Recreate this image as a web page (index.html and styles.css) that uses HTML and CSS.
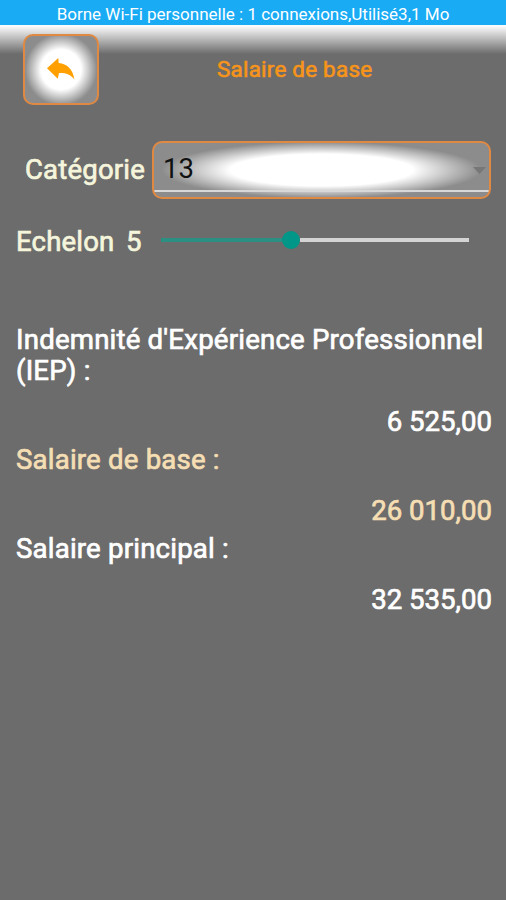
FILE: index.html
```html
<!DOCTYPE html>
<html lang="fr">
<head>
<meta charset="utf-8">
<title>Salaire de base</title>
<link rel="stylesheet" href="styles.css">
</head>
<body>
<div class="status">Borne Wi-Fi personnelle : 1 connexions,Utilisé3,1 Mo</div>
<header class="header">
  <button class="back" aria-label="Retour">
    <svg width="28" height="22" viewBox="0 0 28 22"><path d="M0 10.300 11.300 0 11.700 5C20 5.500 26 11.500 27.400 21.500 23.500 16.500 19 14.800 12 15L10.800 20.800Z" fill="#ffa000"/></svg>
  </button>
  <h1 class="title">Salaire de base</h1>
</header>
<main>
  <div class="category">
    <span class="label">Catégorie</span>
    <div class="select">
      <span class="value">13</span>
      <svg class="caret" width="13" height="7" viewBox="0 0 13 7"><path d="M0 0h13L6.500 7Z" fill="#777"/></svg>
    </div>
  </div>
  <div class="echelon">
    <span class="label name">Echelon</span>
    <span class="label number">5</span>
    <div class="slider"><div class="filled"></div><div class="thumb"></div><div class="rest"></div></div>
  </div>
  <section class="results">
    <p class="caption first">Indemnité d'Expérience Professionnel (IEP) :</p>
    <p class="amount">6 525,00</p>
    <p class="caption base">Salaire de base :</p>
    <p class="amount base">26 010,00</p>
    <p class="caption">Salaire principal :</p>
    <p class="amount">32 535,00</p>
  </section>
</main>
</body>
</html>
```
FILE: styles.css
```css
* { box-sizing: border-box; }
body {
  margin: 0;
  height: 900px;
  overflow: hidden;
  background: #6c6c6c;
  font-family: Roboto, sans-serif;
  color: #fff;
}
.status {
  height: 25px;
  background: #1aabf5;
  font-size: 17px;
  line-height: 28px;
  text-align: center;
  white-space: nowrap;
}
.header {
  height: 91px;
  padding: 9px 0 0 23px;
  display: flex;
  background: linear-gradient(#fff 0, #f2f2f2 3px, #808080 25px, #6c6c6c 29px);
}
.back {
  width: 76px;
  height: 71px;
  padding: 0 0 2px;
  display: flex;
  align-items: center;
  justify-content: center;
  border: 2px solid #e08942;
  border-radius: 10px;
  background: radial-gradient(circle at 50% 50%, #fff 0, #fff 20px, #8c8c8c 36px) border-box;
}
.title {
  margin: 22px 0 0 118px;
  font-size: 22.5px;
  line-height: 27px;
  font-weight: 400;
  letter-spacing: 0.2px;
  color: #f7941a;
  -webkit-text-stroke: 0.6px;
}
.category {
  display: flex;
  margin: 25px 15px 0 25px;
  height: 58px;
}
.label {
  font-size: 27.5px;
  line-height: 32px;
  letter-spacing: 0.2px;
  color: #f5f5dc;
  -webkit-text-stroke: 0.7px;
}
.category .label {
  width: 127px;
  margin-top: 13px;
}
.select {
  flex: 1;
  display: flex;
  justify-content: space-between;
  border: 2px solid #e08942;
  border-radius: 10px;
  background:
    linear-gradient(#d8d8d8, #d8d8d8) 0 47px / 100% 2px no-repeat,
    radial-gradient(ellipse 160px 28px at 50% 50%, #fff 0, #fff 57%, #8c8c8c 100%);
}
.value {
  margin: 10px 0 0 9px;
  font-size: 27.5px;
  line-height: 32px;
  color: #111;
}
.caret { margin: 24px 3px 0 0; }
.echelon {
  display: flex;
  margin: 26px 37px 0 16px;
  height: 32px;
}
.name { width: 110px; padding-top: 1px; }
.number { width: 35px; padding-top: 1px; }
.slider {
  flex: 1;
  display: flex;
  align-items: center;
  height: 29px;
}
.filled { width: 121px; height: 4px; background: #2b8f84; }
.thumb { width: 18px; height: 18px; border-radius: 50%; background: #009688; }
.rest { flex: 1; height: 4px; background: #d4d4d4; }
.results { margin: 67px 14px 0 16px; }
.caption, .amount {
  margin: 0;
  font-size: 27.6px;
  line-height: 31px;
  -webkit-text-stroke: 0.7px;
}
.caption { height: 51px; letter-spacing: 0.2px; }
.first { height: 82px; }
.amount { height: 38px; text-align: right; }
.base { color: #f5deb3; }
```
